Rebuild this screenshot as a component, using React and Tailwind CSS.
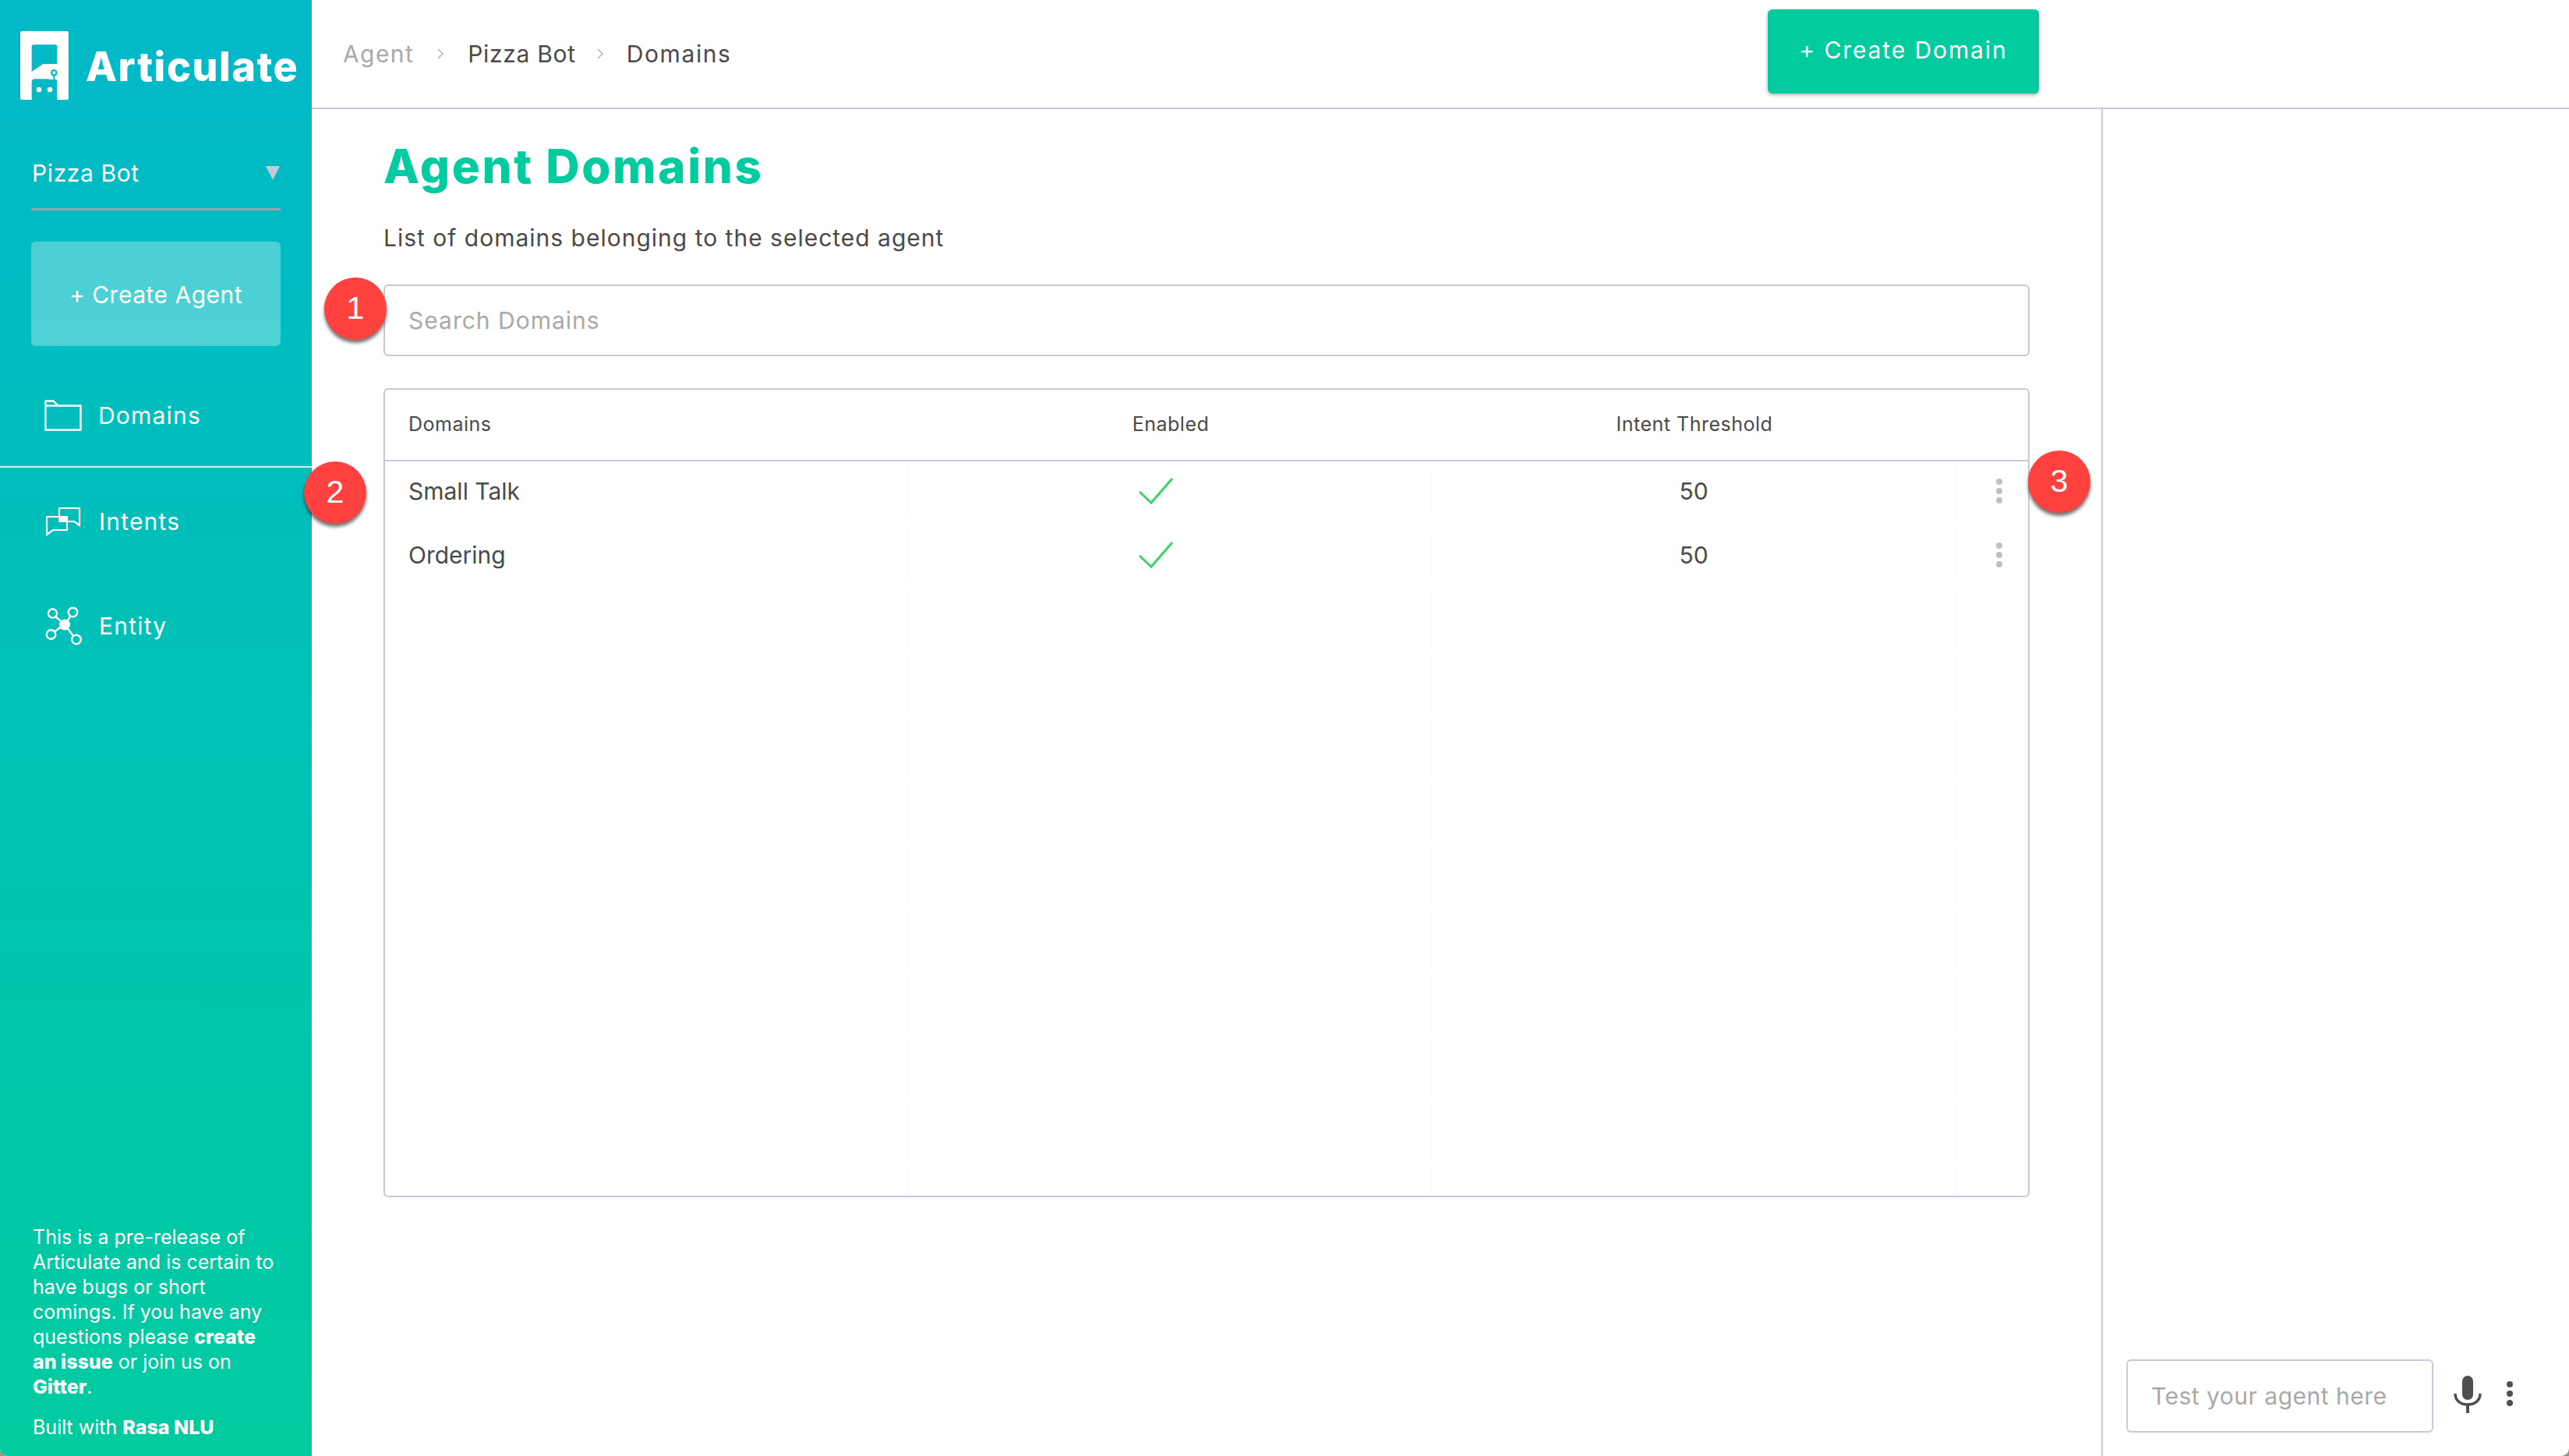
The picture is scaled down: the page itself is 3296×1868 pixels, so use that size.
import React from "react";

const rows = [
  { name: "Small Talk", threshold: 50 },
  { name: "Ordering", threshold: 50 },
];
const padRows = Array.from({ length: 10 }, (_, i) => i);

function Logo() {
  return (
    <svg width="62" height="88" viewBox="0 0 186 264" className="shrink-0">
      <rect x="0" y="0" width="186" height="264" rx="6" fill="#ffffff" />
      <path d="M44 60a8 8 0 0 1 8-8h82a8 8 0 0 1 8 8v66H88l-44 30z" fill="#02b9c6" />
      <path d="M44 264v-68a12 12 0 0 1 12-12h74a12 12 0 0 1 12 12v68z" fill="#02b9c6" />
      <circle cx="72" cy="225" r="10" fill="#ffffff" />
      <circle cx="114" cy="225" r="10" fill="#ffffff" />
      <rect x="110" y="160" width="40" height="26" fill="#ffffff" />
      <circle cx="130" cy="160" r="13" fill="#02b9c6" />
      <circle cx="130" cy="160" r="6" fill="#ffffff" />
      <rect x="127" y="170" width="6" height="16" fill="#02b9c6" />
    </svg>
  );
}

function FolderIcon() {
  return (
    <svg width="48" height="40" viewBox="0 0 48 40" fill="none" stroke="#fff" strokeWidth="2.4">
      <path d="M1.5 1.5h10l6 6h29v31h-45zM1.5 7.5h16" />
    </svg>
  );
}

function IntentIcon() {
  return (
    <svg width="46" height="38" viewBox="0 0 46 38" fill="none" stroke="#fff" strokeWidth="2.2">
      <path d="M18 12V2h26v22l-7-5h-9" />
      <path d="M2 13h26v17H10l-8 6z" />
      <rect x="17" y="12" width="11" height="8" fill="#fff" stroke="none" />
    </svg>
  );
}

function EntityIcon() {
  return (
    <svg width="48" height="50" viewBox="0 0 48 50" fill="none" stroke="#fff" strokeWidth="2.4">
      <path d="M25 23L13 13M25 23l8-11M25 23L11 33M25 23l11 15" />
      <circle cx="25" cy="23.5" r="7" fill="#fff" stroke="none" />
      <circle cx="9.5" cy="9" r="5.6" />
      <circle cx="35.5" cy="7.5" r="5.8" />
      <circle cx="7.5" cy="36" r="5.8" />
      <circle cx="40" cy="42.5" r="5.8" />
    </svg>
  );
}

function Chevron() {
  return (
    <svg width="10" height="16" viewBox="0 0 10 16" fill="none" stroke="#b5b5b5" strokeWidth="1.6">
      <path d="M2 2l6 6-6 6" />
    </svg>
  );
}

function Check() {
  return (
    <svg width="46" height="36" viewBox="0 0 46 36" fill="none" stroke="#37d65f" strokeWidth="3">
      <path d="M2 19l15 14L44 2" />
    </svg>
  );
}

function Dots({ color, gap }) {
  return (
    <div className={`flex flex-col ${gap}`}>
      <span className={`w-2 h-2 rounded-full ${color}`} />
      <span className={`w-2 h-2 rounded-full ${color}`} />
      <span className={`w-2 h-2 rounded-full ${color}`} />
    </div>
  );
}

function Badge({ n, className }) {
  return (
    <div
      className={`absolute w-20 h-20 rounded-full bg-[#ff4140] text-white flex items-center justify-center text-[41px] shadow-[0_4px_4px_rgba(0,0,0,0.55)] ${className}`}
      style={{ fontFamily: '"Liberation Sans", Arial, sans-serif' }}
    >
      {n}
    </div>
  );
}

function NavItem({ icon, label }) {
  return (
    <div className="flex items-center h-[50px] text-white text-[30px] tracking-[1.2px]">
      <div className="w-[69px] flex">{icon}</div>
      {label}
    </div>
  );
}

const cellLine = "border-r-2 border-[#fafafa]";

export default function App() {
  return (
    <div
      className="relative w-[3296px] h-[1868px] overflow-hidden bg-[#9a9488] text-[#4a4a4a]"
      style={{ fontFamily: 'Inter, "Open Sans", sans-serif' }}
    >
      <div className="flex w-full h-full bg-white rounded-b-[10px] overflow-hidden">
        {/* sidebar */}
        <aside className="w-[400px] h-full shrink-0 flex flex-col bg-gradient-to-b from-[#02b8c9] to-[#03cb9f]">
          <div className="flex items-start pl-[26px] pt-[40px] h-[170px]">
            <Logo />
            <span className="ml-[22px] mt-[14px] text-[52px] leading-[64px] font-extrabold text-white tracking-[1.6px]">
              Articulate
            </span>
          </div>
          <div className="mx-[40px] h-[100px] border-b-[3px] border-[#9aa3ad] flex items-center justify-between">
            <span className="text-white text-[30px] pl-[1px] pt-[8px] tracking-[0.6px]">Pizza Bot</span>
            <svg width="18" height="18" viewBox="0 0 18 18" className="mr-[1px] mt-[7px]">
              <path d="M0 0h18L9 18z" fill="#c5c9d8" />
            </svg>
          </div>
          <button className="mx-[40px] mt-[40px] h-[134px] pt-[2px] rounded-[6px] bg-white/30 text-white text-[30px] tracking-[0.5px]">
            + Create Agent
          </button>
          <div className="pt-[64px] h-[156px] border-b-2 border-[#d9eef0] pl-[57px]">
            <NavItem icon={<FolderIcon />} label="Domains" />
          </div>
          <div className="mt-[44px] pl-[58px]">
            <NavItem icon={<IntentIcon />} label="Intents" />
          </div>
          <div className="mt-[84px] pl-[58px]">
            <NavItem icon={<EntityIcon />} label="Entity" />
          </div>
          <div className="mt-auto pl-[42px] pb-[21px] text-white text-[25px] leading-[32px]">
            <p>
              This is a pre-release of
              <br />
              Articulate and is certain to
              <br />
              have bugs or short
              <br />
              comings. If you have any
              <br />
              questions please <b className="font-extrabold">create</b>
              <br />
              <b className="font-extrabold">an issue</b> or join us on
              <br />
              <b className="font-extrabold">Gitter</b>.
            </p>
            <p className="mt-[20px]">
              Built with <b className="font-extrabold">Rasa NLU</b>
            </p>
          </div>
        </aside>

        <div className="flex-1 flex flex-col min-w-0">
          {/* header */}
          <header className="h-[140px] shrink-0 border-b-2 border-[#c5c9d8] flex items-start">
            <nav className="pl-[40px] h-[138px] flex items-center text-[30px]">
              <span className="text-[#a9a9a9] tracking-[1.4px]">Agent</span>
              <span className="ml-[29px] mr-[30px]"><Chevron /></span>
              <span className="tracking-[0.7px]">Pizza Bot</span>
              <span className="ml-[26px] mr-[29px]"><Chevron /></span>
              <span className="tracking-[1.6px]">Domains</span>
            </nav>
            <button className="ml-auto mr-[680px] mt-[12px] w-[348px] h-[108px] pb-[4px] rounded-[6px] bg-[#02cc9f] text-white text-[30px] tracking-[1.9px] shadow-[0_2px_5px_rgba(0,0,0,0.3)]">
              + Create Domain
            </button>
          </header>

          <div className="flex-1 flex min-h-0">
            {/* domains pane */}
            <main className="w-[2298px] border-r-2 border-[#c5c9d8] pl-[92px] pr-[92px] pt-[36px]">
              <h1 className="text-[60px] leading-[74px] font-extrabold text-[#02cc9f] tracking-[2.6px]">
                Agent Domains
              </h1>
              <p className="mt-[35px] text-[30px] leading-[40px] tracking-[1px]">
                List of domains belonging to the selected agent
              </p>
              <input
                placeholder="Search Domains"
                className="mt-[40px] w-full h-[92px] px-[30px] rounded-[6px] border-2 border-[#c5c9d8] text-[30px] tracking-[1px] outline-none placeholder:text-[#a9a9a9]"
              />
              <div className="mt-[41px] h-[1038px] rounded-[6px] border-2 border-[#c5c9d8] flex flex-col overflow-hidden">
                <div className="h-[92px] shrink-0 border-b-2 border-[#c5c9d8] grid grid-cols-[672px_672px_672px_94px] items-center text-[25px] tracking-[0.5px]">
                  <div className="pl-[30px]">Domains</div>
                  <div className="text-center">Enabled</div>
                  <div className="text-center">Intent Threshold</div>
                  <div />
                </div>
                {rows.map((r) => (
                  <div
                    key={r.name}
                    className="h-[82px] pb-[6px] shrink-0 grid grid-cols-[672px_672px_672px_94px] items-center text-[30px]"
                  >
                    <div className={`pl-[30px] h-[64px] flex items-center ${cellLine}`}>{r.name}</div>
                    <div className={`h-[64px] flex items-center pl-[294px] ${cellLine}`}>
                      <Check />
                    </div>
                    <div className={`h-[64px] flex items-center justify-center ${cellLine}`}>
                      {r.threshold}
                    </div>
                    <div className="flex pl-[51px]">
                      <Dots color="bg-[#bcc0cb]" gap="gap-1" />
                    </div>
                  </div>
                ))}
                {padRows.map((i) => (
                  <div key={i} className="h-[82px] shrink-0 grid grid-cols-[672px_672px_672px_94px] items-center">
                    <div className={`h-[74px] ${cellLine}`} />
                    <div className={`h-[74px] ${cellLine}`} />
                    <div className={`h-[74px] ${cellLine}`} />
                    <div />
                  </div>
                ))}
              </div>
            </main>

            {/* test panel */}
            <section className="flex-1 flex items-end pl-[30px] pb-[30px]">
              <input
                placeholder="Test your agent here"
                className="w-[394px] h-[94px] px-[30px] rounded-[6px] border-2 border-[#c5c9d8] text-[30px] tracking-[0.5px] outline-none placeholder:text-[#a9a9a9]"
              />
              <div className="flex items-center h-[94px] pb-[4px]">
                <svg width="36" height="48" viewBox="0 0 36 48" className="ml-[26px]">
                  <rect x="11" y="0" width="14" height="31" rx="7" fill="#4f4f4f" />
                  <path d="M2 23c0 9 7 14 16 14s16-5 16-14" fill="none" stroke="#4f4f4f" strokeWidth="3.5" />
                  <rect x="16" y="36" width="4" height="12" fill="#4f4f4f" />
                </svg>
                <div className="ml-[32px] mb-[2px]">
                  <Dots color="bg-[#4f4f4f]" gap="gap-1" />
                </div>
              </div>
            </section>
          </div>
        </div>
      </div>

      <Badge n="1" className="left-[416px] top-[356px]" />
      <Badge n="2" className="left-[390px] top-[592px]" />
      <Badge n="3" className="left-[2602px] top-[578px]" />
    </div>
  );
}
